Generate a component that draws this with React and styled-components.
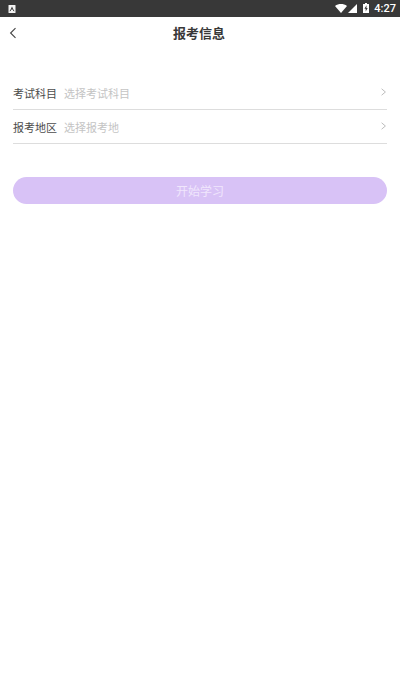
import React from "react";
import styled, { createGlobalStyle } from "styled-components";

const fields = [
  { id: "subject", label: "考试科目", placeholder: "选择考试科目" },
  { id: "region", label: "报考地区", placeholder: "选择报考地" },
];

const StatusBar = () => (
  <Styled.StatusBar>
    <svg width="8" height="8" viewBox="0 0 8 8" aria-hidden="true">
      <rect x="0.5" width="7" height="8" rx="0.6" fill="#f4f4f4" />
      <path d="M4 1.6 5.4 4.6H2.6Z" fill="#383838" />
      <path d="M2 6.2 3 4.4M5 4.4l1 1.8" fill="none" stroke="#383838" strokeWidth="1" />
    </svg>
    <Styled.StatusIcons>
      <svg width="12" height="9" viewBox="0 0 12 9" aria-hidden="true">
        <path d="M0 2C3.5-.6 8.5-.6 12 2L6 9Z" fill="#fff" />
      </svg>
      <svg width="9" height="9" viewBox="0 0 9 9" aria-hidden="true">
        <path d="M9 0v9H0Z" fill="#fff" />
      </svg>
      <Styled.Battery width="6" height="11" viewBox="0 0 6 11" aria-hidden="true">
        <path d="M2 0h2v1h2v9H0V1h2Z" fill="#fff" />
        <path d="M3.6 2.3 1.4 5.8h1.3v2.7l2-3.6H3.4Z" fill="#383838" />
      </Styled.Battery>
      <Styled.Time>4:27</Styled.Time>
    </Styled.StatusIcons>
  </Styled.StatusBar>
);

const PickerRow = ({ id, label, placeholder }) => (
  <Styled.Row>
    <Styled.Label htmlFor={id}>{label}</Styled.Label>
    <Styled.Select id={id} defaultValue="">
      <option value="">{placeholder}</option>
    </Styled.Select>
    <svg width="6" height="10" viewBox="0 0 6 10" aria-hidden="true">
      <path d="M0.6 0.8 4.4 4 0.6 7.2" fill="none" stroke="#b4b4b4" strokeWidth="0.9" />
    </svg>
  </Styled.Row>
);

export default function App() {
  return (
    <>
      <GlobalStyle />
      <StatusBar />
      <Styled.Header>
        <Styled.BackButton type="button" aria-label="返回">
          <svg width="8" height="12" viewBox="0 0 8 12" aria-hidden="true">
            <path d="M6.5 1.2 1.6 6l4.9 4.8" fill="none" stroke="#444" strokeWidth="1.1" />
          </svg>
        </Styled.BackButton>
        <Styled.Title>报考信息</Styled.Title>
      </Styled.Header>
      <Styled.Form>
        {fields.map((field) => (
          <PickerRow key={field.id} {...field} />
        ))}
        <Styled.Submit type="button">开始学习</Styled.Submit>
      </Styled.Form>
    </>
  );
}

const GlobalStyle = createGlobalStyle`
  * {
    box-sizing: border-box;
  }

  body {
    margin: 0;
    background: #fff;
    font-family: "Noto Sans CJK SC", sans-serif;
  }

  button,
  select {
    margin: 0;
    padding: 0;
    border: 0;
    background: none;
    font-family: inherit;
  }

  svg {
    display: block;
    flex: none;
  }
`;

const Styled = {
  StatusBar: styled.div`
    display: flex;
    align-items: center;
    justify-content: space-between;
    height: 17px;
    padding: 0 4px 0 8px;
    background: #383838;
  `,
  StatusIcons: styled.div`
    display: flex;
    align-items: center;
    gap: 1px;
  `,
  Battery: styled.svg`
    margin: 0 4px 0 5px;
  `,
  Time: styled.span`
    color: #fff;
    font-family: Roboto, sans-serif;
    font-size: 11px;
    font-weight: 500;
    line-height: 17px;
  `,
  Header: styled.header`
    display: grid;
    grid-template-columns: 32px 1fr 32px;
    align-items: center;
    height: 32px;
    padding-right: 2px;
  `,
  BackButton: styled.button`
    display: flex;
    align-items: center;
    height: 32px;
    padding-left: 9px;
  `,
  Title: styled.h1`
    margin: 0;
    color: #383838;
    font-size: 13px;
    font-weight: 700;
    line-height: 32px;
    text-align: center;
  `,
  Form: styled.form`
    padding: 27px 13px;
  `,
  Row: styled.div`
    display: flex;
    align-items: center;
    height: 34px;
    border-bottom: 1px solid #ddd;
  `,
  Label: styled.label`
    width: 51px;
    color: #4c4c4c;
    font-size: 11px;
    line-height: 16px;
  `,
  Select: styled.select`
    flex: 1;
    min-width: 0;
    appearance: none;
    color: #c4c4c4;
    font-size: 11px;
    line-height: 16px;
  `,
  Submit: styled.button`
    display: block;
    width: 100%;
    height: 27px;
    margin-top: 33px;
    border-radius: 14px;
    background: #d8c2f6;
    color: #f0e6fc;
    font-size: 12px;
    line-height: 27px;
  `,
};
